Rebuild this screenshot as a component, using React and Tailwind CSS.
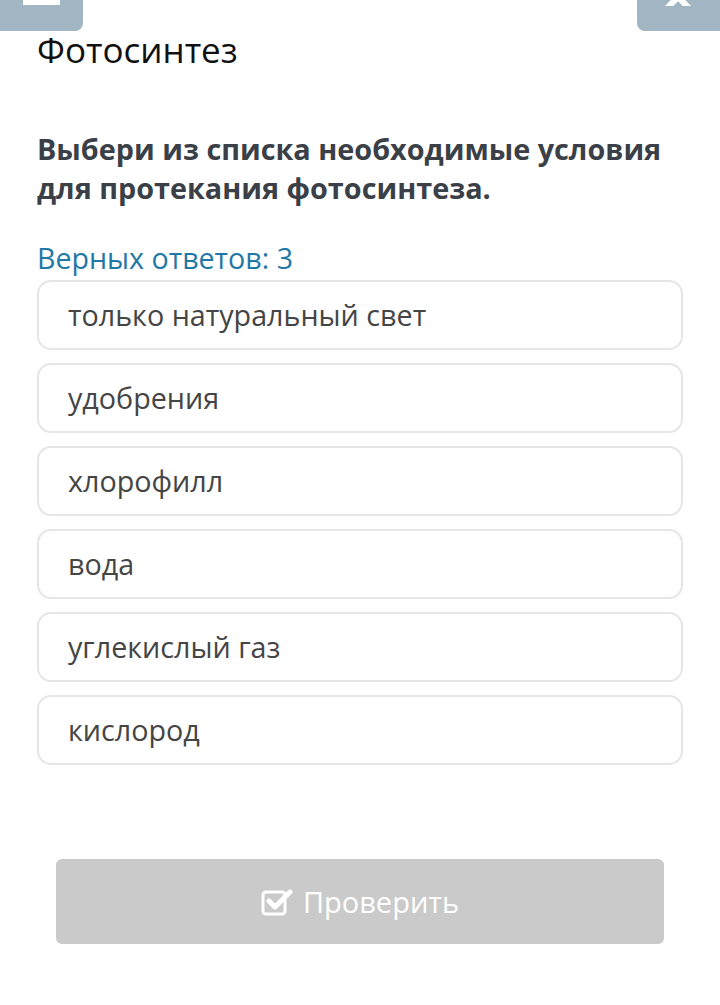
import React from "react";

const options = [
  "только натуральный свет",
  "удобрения",
  "хлорофилл",
  "вода",
  "углекислый газ",
  "кислород",
];

export default function App() {
  return (
    <div className="relative w-[720px] h-[1005px] bg-white overflow-hidden" style={{ fontFamily: '"Open Sans", "Noto Sans", sans-serif' }}>
      <div className="absolute left-0 top-0 w-[83px] h-[31px] bg-[#a2b5c3] rounded-br-[8px]">
        <div className="absolute left-[23px] top-0 w-[37px] h-[5px] bg-white" />
      </div>
      <div className="absolute right-0 top-0 w-[83px] h-[31px] bg-[#a2b5c3] rounded-bl-[8px]">
        <svg className="absolute left-[26px] top-[-14px]" width="30" height="20" viewBox="0 0 30 20">
          <path d="M4 0 L15 11 L26 0 M4 22 L15 11 L26 22" stroke="white" strokeWidth="6" fill="none" />
        </svg>
      </div>
      <div className="flex flex-col px-[37px]">
        <h1 className="mt-[29px] text-[35px] leading-[42px] text-[#111] font-normal">Фотосинтез</h1>
        <p className="mt-[58px] text-[28.8px] leading-[39px] font-bold text-[#3a3f48]">
          Выбери из списка необходимые условия для протекания фотосинтеза.
        </p>
        <div className="mt-[33px] text-[28.6px] leading-[36px] text-[#1f78a5]">Верных ответов: 3</div>
        <div className="mt-[4px] flex flex-col gap-[13px]">
          {options.map((o) => (
            <div key={o} className="h-[70px] border-2 border-[#e6e6e6] rounded-[14px] flex items-center pl-[29px] text-[28.7px] text-[#454545]">
              {o}
            </div>
          ))}
        </div>
        <div className="mt-[94px] mx-[19px] h-[85px] bg-[#cacaca] rounded-[6px] flex items-center justify-center gap-[10px] text-white text-[29px]">
          <svg width="32" height="28" viewBox="0 0 32 28" fill="none">
            <rect x="2" y="4" width="22" height="22" rx="3" stroke="white" strokeWidth="3" />
            <path d="M8 13 L14 19 L29 4" stroke="white" strokeWidth="5" strokeLinecap="round" strokeLinejoin="round" />
          </svg>
          <span>Проверить</span>
        </div>
      </div>
    </div>
  );
}
